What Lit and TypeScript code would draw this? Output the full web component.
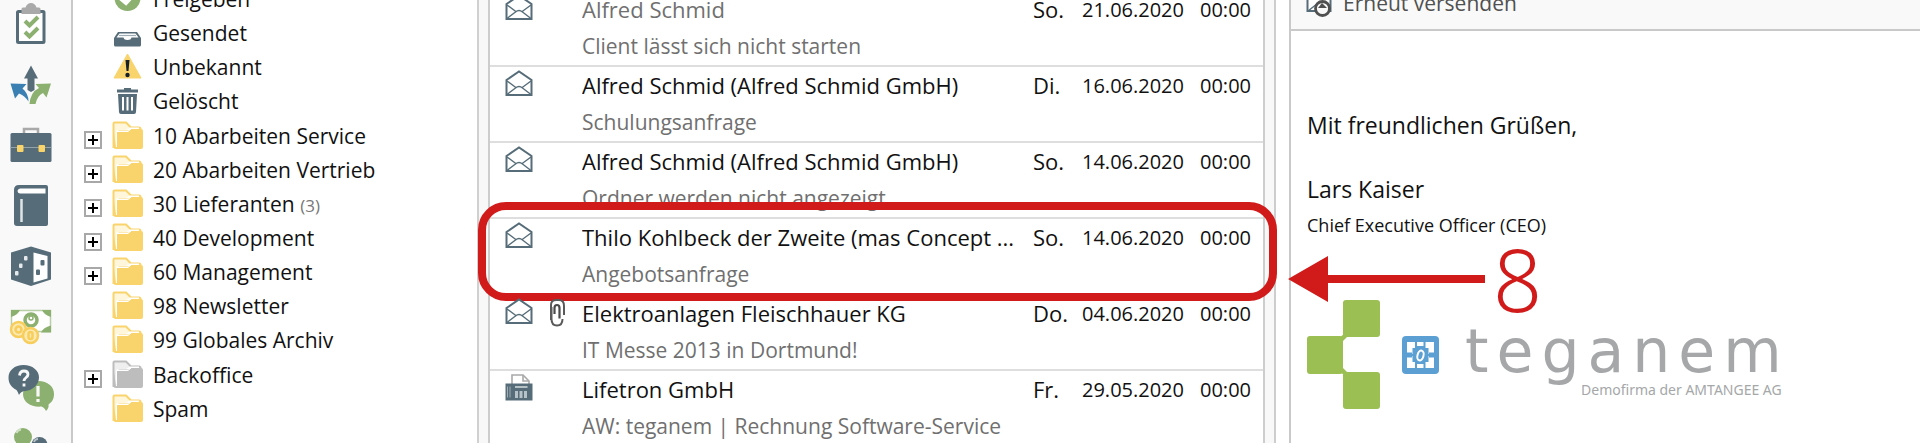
import { LitElement, html, svg, css, nothing, type TemplateResult } from "lit";
import { customElement, property } from "lit/decorators.js";

const SLATE = "#566d79";
const GREEN = "#8cb070";

/* ---------- navigation rail ---------- */

const railItems = [
  {
    label: "Aufgaben",
    box: "7 -1 48 49",
    art: svg`
      <rect x="17.5" y="11.5" width="26.5" height="31" rx="1" fill="#fff" stroke=${SLATE} stroke-width="3"/>
      <path d="M21.5 14V9q0-1.500 1.500-1.500h2.500q1.500-4.500 5.500-4.500t5.500 4.500h2.500q1.500 0 1.500 1.500v5z" fill="#a9a9a9"/>
      <path d="M25 21l4.500 4.500 8.500-8.500M25 32l4.500 4.500 8.500-8.500" fill="none" stroke=${GREEN} stroke-width="4"/>`,
  },
  {
    label: "Workflow",
    box: "7 60 48 49",
    art: svg`
      <path d="M31 65.500l7 13h-3.500v11.500l-3.500 2-3.500-2v-11.500h-3.500z" fill=${SLATE}/>
      <path d="M10.500 83.500l16 .5-4 4.500q6 5 6 13-4-6-9.500-8l-4 5z" fill="#3a80b3"/>
      <path d="M51 83.500l-4.500 14-3.500-4.500q-6 3-7.500 11h-6q1-12 9.500-16l-3.500-4z" fill=${GREEN}/>`,
  },
  {
    label: "Projekte",
    box: "7 121 48 49",
    art: svg`
      <path d="M24 133v-4h14v4" fill="none" stroke="#a9a9a9" stroke-width="2.500"/>
      <rect x="10.500" y="133" width="41" height="29" rx="1.500" fill=${SLATE}/>
      <path d="M10.500 147.500h41" stroke="#93a3ab" stroke-width="1.200"/>
      <rect x="17" y="145" width="6.500" height="7" rx="1" fill="#f8d46a"/>
      <rect x="38.500" y="145" width="6.500" height="7" rx="1" fill="#f8d46a"/>`,
  },
  {
    label: "Adressbuch",
    box: "7 182 48 49",
    art: svg`
      <path d="M14 190q0-5 5-5h27q2 0 2 2v37q0 2-2 2h-29q-3 0-3-3z" fill=${SLATE}/>
      <path d="M20 188.500h25.500v5h-25.500q-2.500-.5-2.500-2.500t2.500-2.500z" fill="#fff"/>
      <path d="M21.500 199v23" stroke="#dfe4e7" stroke-width="2.500"/>`,
  },
  {
    label: "Auswertungen",
    box: "7 243 48 49",
    art: svg`
      <path d="M31 246.500l20 6v27l-20 6.500-20-6.500v-27z" fill=${SLATE}/>
      <path d="M33.500 252.500l14 3.500v22.500l-14 4z" fill="#fff"/>
      <g fill="#e6eaec">
        <rect x="24" y="256" width="3.500" height="4.500" rx="1"/>
        <rect x="19" y="263.500" width="3.500" height="4.500" rx="1"/>
        <rect x="15" y="271" width="3.500" height="4.500" rx="1"/>
      </g>
      <rect x="40.500" y="260" width="4" height="5.500" rx="1" fill=${SLATE}/>
      <rect x="36" y="269.500" width="4" height="5.500" rx="1" fill=${SLATE}/>`,
  },
  {
    label: "Finanzen",
    box: "7 304 48 49",
    art: svg`
      <rect x="11.500" y="310.500" width="39" height="21" fill="#fff" stroke="#b9cfa6" stroke-width="1.500"/>
      <path d="M11 310h9q-2 5-9 7zM51 310h-9q2 5 9 7zM51 332.500h-10q2-5 10-7z" fill=${GREEN}/>
      <circle cx="31" cy="320" r="6" fill="none" stroke=${GREEN} stroke-width="3.500"/>
      <circle cx="31" cy="318" r="2" fill="none" stroke=${GREEN} stroke-width="1.500"/>
      <g fill="#fbe9b0" stroke="#f7cd5c" stroke-width="2.500">
        <circle cx="18.500" cy="329.500" r="7.500"/>
        <circle cx="30.500" cy="335.500" r="7.500"/>
        <circle cx="18.500" cy="329.500" r="3" fill="none"/>
        <rect x="28.500" y="332" width="4" height="7" rx="2" fill="none"/>
      </g>`,
  },
  {
    label: "Hilfe",
    box: "7 365 48 49",
    art: svg`
      <path d="M38.500 381c9 0 15.500 5.500 15.500 13 0 5-2 8-5.500 10.500.5 2.500-.5 4.500-2.500 6.500-1-2-2.500-4-4.500-4.500-10 1-18.500-4-18.500-12.500 0-7.500 6.500-13 15.500-13z" fill=${GREEN}/>
      <path d="M23.500 365c9 0 15.500 5.500 15.500 12.500s-6.500 13-13.500 13.500q-4.500 0-6.500 4-1-3-2.500-5c-5-2.500-8-6.500-8-12.500 0-7 6-12.500 15-12.500z" fill=${SLATE}/>
      <path d="M19.500 375.500q.5-4.500 4.500-4.500t4 3.500c0 3-4 3-4 6.500M24 383.500v3" fill="none" stroke="#f8f8f8" stroke-width="2.800"/>
      <path d="M38 386v10.500M38 399v3" stroke="#f8f8f8" stroke-width="3.200"/>`,
  },
  {
    label: "Kontakte",
    box: "7 426 48 49",
    art: svg`
      <circle cx="23" cy="437" r="9" fill=${GREEN}/>
      <path d="M16.500 433q1-3 4.500-3.500" fill="none" stroke="#cfe0c2" stroke-width="2"/>
      <path d="M19 445h8l2 8h-12z" fill=${GREEN}/>
      <circle cx="39.500" cy="445" r="8" fill=${SLATE}/>
      <path d="M34 442q1-3 4-3" fill="none" stroke="#b4c0c6" stroke-width="1.800"/>`,
  },
];

/* ---------- folder icons ---------- */

const folder = (fill: string, light: string) => svg`
  <path d="M1.500 27V2.500Q1.500 1.500 2.500 1.500H14l5 5H27q1.500 0 1.500 1.500v2" fill=${light} stroke=${fill} stroke-width="2"/>
  <path d="M4 24V11q0-2 2-2h8l4-2.500h9V10H8q-2 1-2 3v12z" fill="#fff"/>
  <path d="M5 28V12q0-2.500 2.500-2.500h9L19.500 8H29q2 0 2 2v16q0 2-2 2z" fill=${fill}/>
  <path d="M5 10.500h11l3-2.500" fill="none" stroke="#fff" stroke-width="1"/>
  <path d="M1 5v20q0 3 3 3h3V26H4z" fill=${fill}/>`;

const folderArt: Record<string, TemplateResult> = {
  yellow: folder("#f9d46c", "#fff6dc"),
  grey: folder("#bdbdbd", "#efefef"),
  check: svg`
    <circle cx="15.500" cy="14" r="13" fill=${GREEN}/>
    <path d="M8 14l6 5 10-11" fill="none" stroke="#fff" stroke-width="4"/>`,
  tray: svg`
    <path d="M6 14h19l4 6v7q0 1.500-1.500 1.500h-24Q2 28.500 2 27v-7z" fill=${SLATE}/>
    <path d="M7.500 15.500h16l3 4H19.500q-.5 2.500-4 2.500t-4-2.500H4.500z" fill="#fff"/>
    <path d="M7 17.500h17" stroke="#9fadb4" stroke-width="1.200"/>`,
  warning: svg`
    <path d="M15.500 2l13.500 24H2z" fill="#f9d46c" stroke="#f9d46c" stroke-linejoin="round"/>
    <path d="M13.500 8h4l-1 11h-2z" fill="#16202a"/>
    <circle cx="15.500" cy="23" r="2.200" fill="#16202a"/>`,
  trash: svg`
    <path d="M12 3.500V2h7v1.500h7v3H5v-3z" fill=${SLATE}/>
    <path d="M6 8h19l-1 18q0 2-2 2H9q-2 0-2-2z" fill=${SLATE}/>
    <path d="M11 11v13.500M15.500 11v13.500M20 11v13.500" stroke="#fff" stroke-width="2"/>`,
};

type Folder = { name: string; icon: string; sub?: boolean; count?: number };

const folderGroups: Folder[][] = [
  [
    { name: "Freigeben", icon: "check" },
    { name: "Gesendet", icon: "tray" },
    { name: "Unbekannt", icon: "warning" },
    { name: "Gelöscht", icon: "trash" },
  ],
  [
    { name: "10 Abarbeiten Service", icon: "yellow", sub: true },
    { name: "20 Abarbeiten Vertrieb", icon: "yellow", sub: true },
    { name: "30 Lieferanten", icon: "yellow", sub: true, count: 3 },
    { name: "40 Development", icon: "yellow", sub: true },
    { name: "60 Management", icon: "yellow", sub: true },
    { name: "98 Newsletter", icon: "yellow" },
    { name: "99 Globales Archiv", icon: "yellow" },
  ],
  [
    { name: "Backoffice", icon: "grey", sub: true },
    { name: "Spam", icon: "yellow" },
  ],
];

/* ---------- messages ---------- */

const envelope = svg`
  <path d="M1.500 10L14 1.500 26.500 10v15h-25z" fill="#fff" stroke=${SLATE} stroke-width="2"/>
  <path d="M2 11l9.500 7M26 11l-9.500 7M2 24.500l8.500-6.500q3.500-3 7 0l8.500 6.500" fill="none" stroke=${SLATE} stroke-width="1.400"/>`;

const fax = svg`
  <path d="M7 10V1h11l6 6v3" fill="#fff" stroke="#a9a9a9" stroke-width="1.600"/>
  <path d="M18 1v6h6" fill="none" stroke="#a9a9a9" stroke-width="1.600"/>
  <path d="M0.500 9.500h27V26.500h-27z" fill=${SLATE}/>
  <path d="M2.500 12.500v11M5 12.500v11" stroke="#9fadb4" stroke-width="1"/>
  <path d="M10 13h12.500" stroke="#d7dee1" stroke-width="1.500"/>
  <path d="M10 17h3v7h-3zM14.500 17h3v7h-3zM19 17h3v7h-3z" fill="#b7c2c8"/>`;

const clip = svg`
  <path d="M2.500 8v12q0 6.500 5.500 6.500t5.500-6.500" fill="none" stroke="#5a5a5a" stroke-width="2"/>
  <path d="M2 21V6q0-5 5-5h3q5 0 5 6v9" fill="none" stroke="#5a5a5a" stroke-width="2"/>
  <path d="M5.500 15V9q0-3 2.500-3t2.500 3V19.500" fill="none" stroke="#4a4a4a" stroke-width="2.200"/>`;

type Mail = {
  from: string;
  subject: string;
  day: string;
  date: string;
  kind?: "fax";
  dim?: boolean;
  attachment?: boolean;
  marker?: string;
};

const mails: Mail[] = [
  { from: "Alfred Schmid", subject: "Client lässt sich nicht starten", day: "So.", date: "21.06.2020", dim: true },
  { from: "Alfred Schmid (Alfred Schmid GmbH)", subject: "Schulungsanfrage", day: "Di.", date: "16.06.2020" },
  { from: "Alfred Schmid (Alfred Schmid GmbH)", subject: "Ordner werden nicht angezeigt", day: "So.", date: "14.06.2020" },
  { from: "Thilo Kohlbeck der Zweite (mas Concept ...", subject: "Angebotsanfrage", day: "So.", date: "14.06.2020", marker: "8" },
  { from: "Elektroanlagen Fleischhauer KG", subject: "IT Messe 2013 in Dortmund!", day: "Do.", date: "04.06.2020", attachment: true },
  { from: "Lifetron GmbH", subject: "AW: teganem | Rechnung Software-Service", day: "Fr.", date: "29.05.2020", kind: "fax" },
];

const reset = css`
  * { box-sizing: border-box; }
  ul { list-style: none; margin: 0; padding: 0; }
  button { border: 0; padding: 0; background: none; font: inherit; color: inherit; text-align: left; cursor: pointer; }
  svg { display: block; flex: none; }
`;

@customElement("nav-rail")
class NavRail extends LitElement {
  static styles = [reset, css`
    :host { display: block; background: #f9f9f9; border-right: 2px solid #c9c9c9; }
    .items { display: flex; flex-direction: column; margin-top: -7px; padding-right: 9px; }
    .item { display: grid; place-items: center; width: 100%; height: 61px; }
  `];
  render() {
    return html`<nav class="items">
      ${railItems.map((i) => html`<button class="item" aria-label=${i.label}>
        <svg width="48" height="49" viewBox=${i.box}>${i.art}</svg>
      </button>`)}
    </nav>`;
  }
}

@customElement("folder-tree")
class FolderTree extends LitElement {
  static styles = [reset, css`
    :host { display: block; background: #fff; border-right: 2px solid #d0d0d0; font-size: 21px; }
    .tree { display: grid; gap: 1px; margin-top: -19px; padding-left: 11px; }
    .row { display: grid; grid-template-columns: 28px 32px 1fr; align-items: center; height: 34px; }
    .toggle { display: grid; place-items: center; width: 18px; height: 18px; margin-top: 10px; border: 2px solid #a8a8a8; background: #fff; }
    .name { padding: 2px 0 0 9px; white-space: nowrap; }
    .count { color: #777; font-size: 17px; }
  `];
  render() {
    return html`<div class="tree">
      ${folderGroups.map((group) => html`<ul>
        ${group.map((f) => html`<li class="row">
          ${f.sub
            ? html`<button class="toggle" aria-label="${f.name} aufklappen">
                <svg width="10" height="10" viewBox="0 0 10 10"><path d="M5 0v10M0 5h10" stroke="#000" stroke-width="2"/></svg>
              </button>`
            : html`<span></span>`}
          <svg width="32" height="29" viewBox="0 0 32 29">${folderArt[f.icon]}</svg>
          <button class="name">${f.name}${f.count ? html` <span class="count">(${f.count})</span>` : nothing}</button>
        </li>`)}
      </ul>`)}
    </div>`;
  }
}

@customElement("callout-marker")
class CalloutMarker extends LitElement {
  @property() label = "";
  static styles = css`
    :host { position: absolute; inset: -17px -14px -8px -12px; border: 8px solid #d11a1a; border-radius: 28px; pointer-events: none; }
    .pointer { position: absolute; left: 100%; top: 50%; display: flex; align-items: center; gap: 8px; margin: -13px 0 0 19px; height: 80px; }
    .number { color: #d11a1a; font-family: "Noto Sans", "Open Sans", sans-serif; font-weight: 300; font-size: 86px; line-height: 80px; }
    svg { display: block; flex: none; }
  `;
  render() {
    return html`<div class="pointer">
      <svg width="197" height="46" viewBox="0 0 197 46"><path d="M0 23L40 0v19h157v8H40v19z" fill="#d11a1a"/></svg>
      <span class="number">${this.label}</span>
    </div>`;
  }
}

@customElement("mail-list")
class MailList extends LitElement {
  static styles = [reset, css`
    :host { display: block; background: #fff; border: solid #cdcdcd; border-width: 0 2px; }
    .mails { margin-top: -9px; }
    .mail {
      position: relative; display: grid; grid-template-columns: 28px 17px minmax(0, 1fr) 32px 103px 51px;
      column-gap: 16px; height: 76px; line-height: 36px; padding: 0 12px 0 15px; border-bottom: 2px solid #dedede; white-space: nowrap;
    }
    .kind { margin-top: 3px; }
    .clip { margin-top: 4px; }
    .text { display: grid; align-content: start; align-self: start; }
    .from, .subject { overflow: hidden; }
    .subject { color: #707070; font-size: 21px; padding-top: 1px; }
    .dim { color: #707070; }
    .date, .time { text-align: right; font-size: 20px; padding-top: 1px; }
  `];
  render() {
    return html`<ul class="mails">
      ${mails.map((m) => html`<li class="mail">
        <svg class="kind" width="28" height="27" viewBox="0 0 28 27">${m.kind === "fax" ? fax : envelope}</svg>
        ${m.attachment ? html`<svg class="clip" width="17" height="28" viewBox="0 0 17 28">${clip}</svg>` : html`<span></span>`}
        <button class="text">
          <span class="from ${m.dim ? "dim" : ""}">${m.from}</span>
          <span class="subject">${m.subject}</span>
        </button>
        <span class="day">${m.day}</span>
        <span class="date">${m.date}</span>
        <span class="time">00:00</span>
        ${m.marker ? html`<callout-marker label=${m.marker}></callout-marker>` : nothing}
      </li>`)}
    </ul>`;
  }
}

@customElement("mail-preview")
class MailPreview extends LitElement {
  static styles = [reset, css`
    :host { display: block; background: #fff; border-left: 2px solid #c9c9c9; }
    .bar { display: flow-root; height: 31px; background: #f9f9f9; border-bottom: 2px solid #c9c9c9; padding-left: 15px; }
    .resend { display: flex; align-items: center; gap: 11px; height: 36px; margin-top: -15px; color: #505050; font-size: 21px; }
    .letter { padding: 76px 16px 0; font-size: 23px; }
    .line { margin: 0; line-height: 36px; }
    .signer { margin: 28px 0 0; line-height: 36px; }
    .role { margin: 0; line-height: 36px; font-size: 18px; }
    .brand { display: flex; align-items: center; margin-top: 57px; }
    .emblem { margin-left: 22px; }
    .wordmark { display: grid; justify-items: end; margin-left: 26px; padding-top: 7px; font-family: "DejaVu Sans", sans-serif; color: #a5a7a9; }
    .letters { display: flex; gap: 8px; font-size: 60px; line-height: 70px; }
    .claim { font-family: "Noto Sans", sans-serif; font-size: 14px; line-height: 20px; margin-top: -6px; }
  `];
  render() {
    return html`
      <div class="bar">
        <button class="resend">
          <svg width="26" height="28" viewBox="0 0 26 28">
            <path d="M1.500 10L13 2l11.500 8v12h-23z" fill="#fff" stroke=${SLATE} stroke-width="2"/>
            <path d="M2 22l9-7h4l9 7" fill="none" stroke=${SLATE} stroke-width="1.400"/>
            <circle cx="16.500" cy="19.500" r="7" fill="#f9f9f9" stroke="#505050" stroke-width="2.800"/>
            <path d="M12 19l4-5 5 5z" fill="#505050"/>
          </svg>
          Erneut versenden
        </button>
      </div>
      <div class="letter">
        <p class="line">Mit freundlichen Grüßen,</p>
        <p class="signer">Lars Kaiser</p>
        <p class="role">Chief Executive Officer (CEO)</p>
        <div class="brand">
          <svg width="73" height="109" viewBox="0 0 73 109">
            <g fill="#9bbf53">
              <rect x="36" y="0" width="37" height="37" rx="3"/>
              <rect x="0" y="36" width="36" height="38" rx="3"/>
              <rect x="36" y="72" width="37" height="37" rx="3"/>
              <path d="M32 38l5-4 3 3-4 4zM32 71l5 4 3-3-4-4z"/>
            </g>
          </svg>
          <svg class="emblem" width="37" height="38" viewBox="0 0 37 38">
            <rect width="37" height="38" rx="4" fill="#5b9fd3"/>
            <path d="M5 6h27v26H5z" fill="#fff"/>
            <path d="M14 5v28M22.500 5v28M4 19h29" stroke="#5b9fd3" stroke-width="2"/>
            <path d="M10.500 12h4v-2h8v2h4v14h-4v2h-8v-2h-4z" fill="#5b9fd3"/>
            <path d="M4 16.500h6v5H4zM27 16.500h6v5h-6z" fill="#5b9fd3"/>
            <ellipse cx="18.500" cy="19.500" rx="3" ry="5" transform="rotate(15 18.500 19.500)" fill="none" stroke="#fff" stroke-width="2"/>
          </svg>
          <div class="wordmark">
            <div class="letters">${[..."teganem"].map((c) => html`<span>${c}</span>`)}</div>
            <div class="claim">Demofirma der AMTANGEE AG</div>
          </div>
        </div>
      </div>`;
  }
}

@customElement("app-root")
class AppRoot extends LitElement {
  static styles = css`
    :host {
      display: grid; grid-template-columns: 73px 406px 9px minmax(0, 777fr) 9px 15px minmax(0, 631fr);
      height: 100vh; overflow: hidden; background: #fff; color: #111;
      font-family: "Open Sans", "Noto Sans", sans-serif; font-size: 22px;
    }
    .gutter { background: #f8f8f8; }
    .edge { border-left: 2px solid #cdcdcd; }
    mail-list { position: relative; z-index: 1; }
  `;
  render() {
    return html`
      <nav-rail></nav-rail>
      <folder-tree></folder-tree>
      <div class="gutter"></div>
      <mail-list></mail-list>
      <div class="gutter"></div>
      <div class="edge"></div>
      <mail-preview></mail-preview>`;
  }
}
